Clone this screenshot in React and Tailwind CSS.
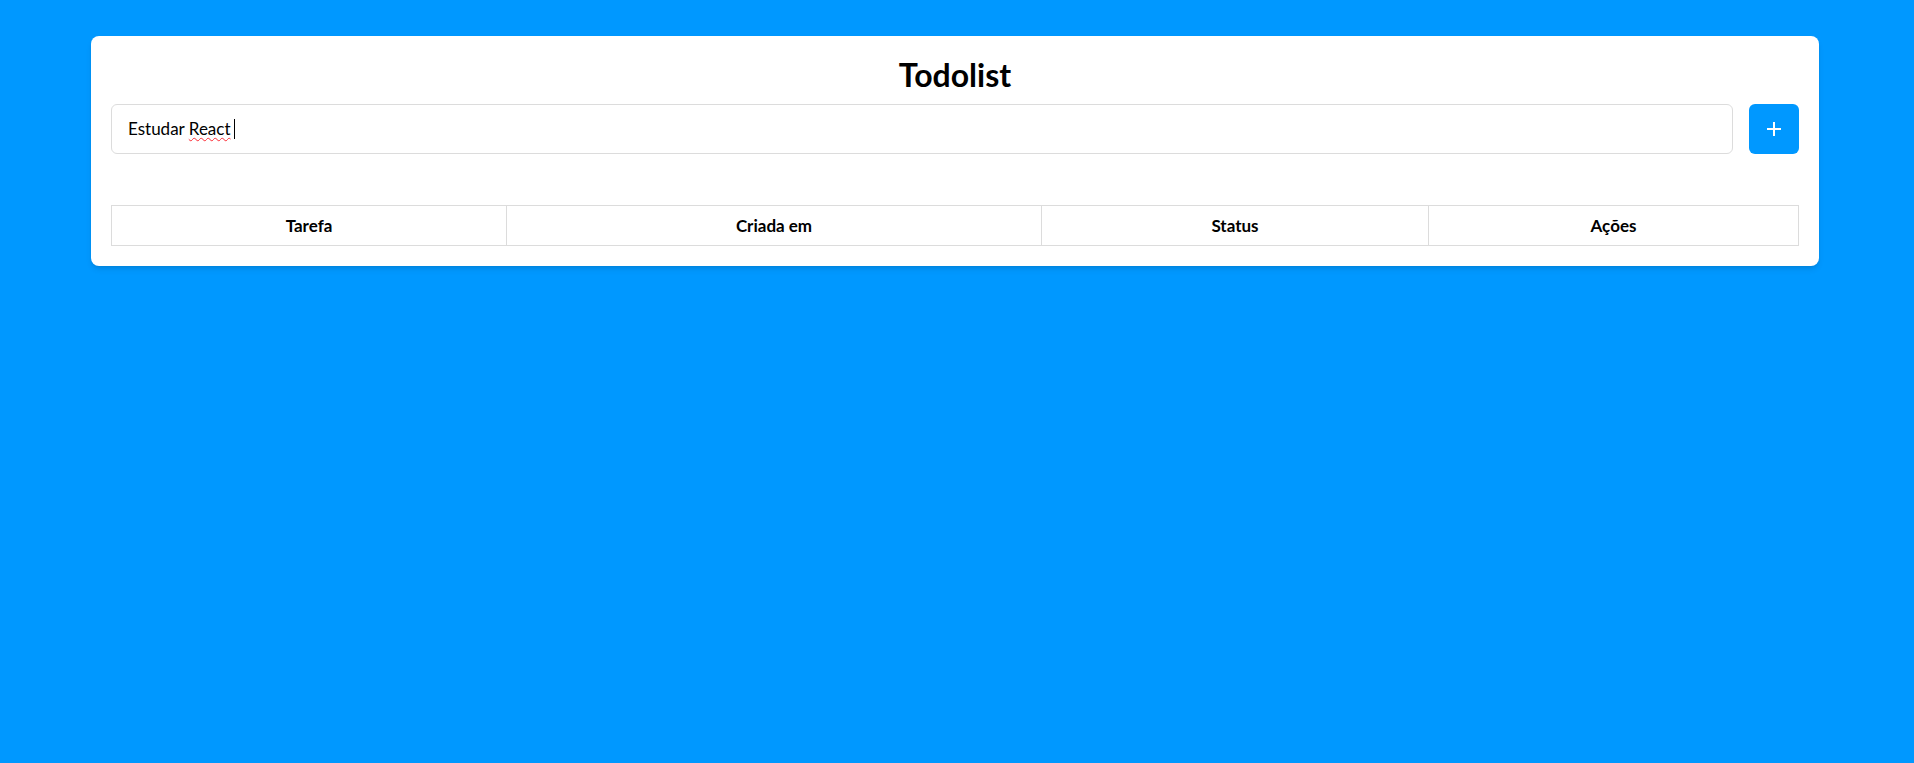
const columns = [
  { label: "Tarefa", width: "w-[395px]" },
  { label: "Criada em", width: "w-[535px]" },
  { label: "Status", width: "w-[387px]" },
  { label: "Ações", width: "" },
];

const App = () => {
  return (
    <div className="min-h-[763px] bg-[#0098ff] pt-[36px] font-['Lato',sans-serif] text-black">
      <div className="ml-[91px] w-[1728px] rounded-lg bg-white px-5 pb-5 pt-5 shadow-md">
        {/* Title */}
        <h1 className="mb-[10px] text-center text-[32px] font-bold leading-[38px]">Todolist</h1>

        {/* New task */}
        <div className="flex gap-4">
          <div className="flex h-[50px] flex-1 items-center rounded-md border border-[#dcdcdc] px-4 text-[17px]">
            <span>Estudar&nbsp;</span>
            <span className="underline decoration-red-500 decoration-wavy decoration-1 underline-offset-2">React</span>
            <span className="ml-[3px] h-[20px] w-px bg-black" />
          </div>
          <button className="flex size-[50px] items-center justify-center rounded-md bg-[#0098ff] text-white">
            <svg width="16" height="16" viewBox="0 0 16 16" fill="none" stroke="currentColor" strokeWidth="2">
              <path d="M8 1v14M1 8h14" />
            </svg>
          </button>
        </div>

        {/* Tasks table */}
        <table className="mt-[51px] w-full border-collapse">
          <thead>
            <tr>
              {columns.map((c) => (
                <th key={c.label} className={`${c.width} h-[40px] border border-[#dcdcdc] p-0 text-center text-[17px] font-bold`}>
                  {c.label}
                </th>
              ))}
            </tr>
          </thead>
        </table>
      </div>
    </div>
  );
};

export default App;
